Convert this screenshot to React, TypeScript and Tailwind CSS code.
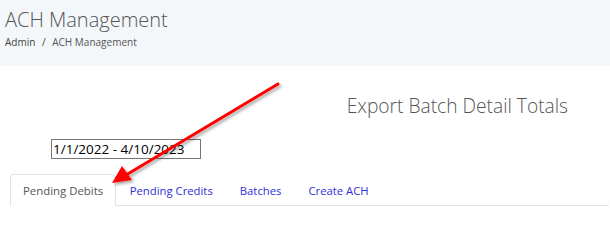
const tabs = ["Pending Debits", "Pending Credits", "Batches", "Create ACH"];

function Arrow() {
  return (
    <svg
      className="pointer-events-none absolute left-0 top-0"
      width="610"
      height="240"
      viewBox="0 0 610 240"
    >
      <defs>
        <filter id="sh" x="-20%" y="-20%" width="140%" height="140%">
          <feDropShadow dx="2" dy="2" stdDeviation="1.5" floodColor="#000" floodOpacity="0.35" />
        </filter>
      </defs>
      <g filter="url(#sh)">
        <line x1="278" y1="84" x2="126" y2="175" stroke="#ff0000" strokeWidth="3" strokeLinecap="round" />
        <polygon points="112,183 122,166 132,180" fill="#ff0000" />
      </g>
    </svg>
  );
}

export default function App() {
  return (
    <div
      className="relative h-[240px] w-[610px] overflow-hidden bg-white"
      style={{ fontFamily: '"Segoe UI", "Open Sans", sans-serif' }}
    >
      <div className="h-[66px] bg-[#f3f7fa] px-[5px] pt-[5px]">
        <h1 className="text-[20px] font-light leading-[29px] text-[#555]">ACH Management</h1>
        <div className="mt-[1px] text-[10px] leading-[14px] text-[#444]">
          Admin <span className="mx-[4px]">/</span> <span className="text-[#555]">ACH Management</span>
        </div>
      </div>

      <div className="flex justify-end pr-[42px] pt-[26px]">
        <h2 className="text-[19.2px] font-light leading-[28px] text-[#555]">Export Batch Detail Totals</h2>
      </div>

      <div className="mt-[19px] pl-[51px]">
        <input
          readOnly
          value="1/1/2022 - 4/10/2023"
          className="block h-[20px] w-[150px] border border-[#767676] px-[1px] text-[13.5px] text-black outline-none"
        />
      </div>

      <div className="ml-[10px] mr-[1px] mt-[15px] flex border-b border-[#dee2e6]">
        {tabs.map((t, i) => (
          <div
            key={t}
            className={
              i === 0
                ? "-mb-px h-[32px] rounded-t-[4px] border border-[#dee2e6] border-b-white bg-white px-[12px] pt-[7px] text-[11.4px] leading-[17px] text-[#555]"
                : "-mb-px h-[32px] border border-transparent px-[12.5px] pt-[7px] text-[11.3px] leading-[17px] text-[#3030d8]"
            }
          >
            {t}
          </div>
        ))}
      </div>

      <Arrow />
    </div>
  );
}
